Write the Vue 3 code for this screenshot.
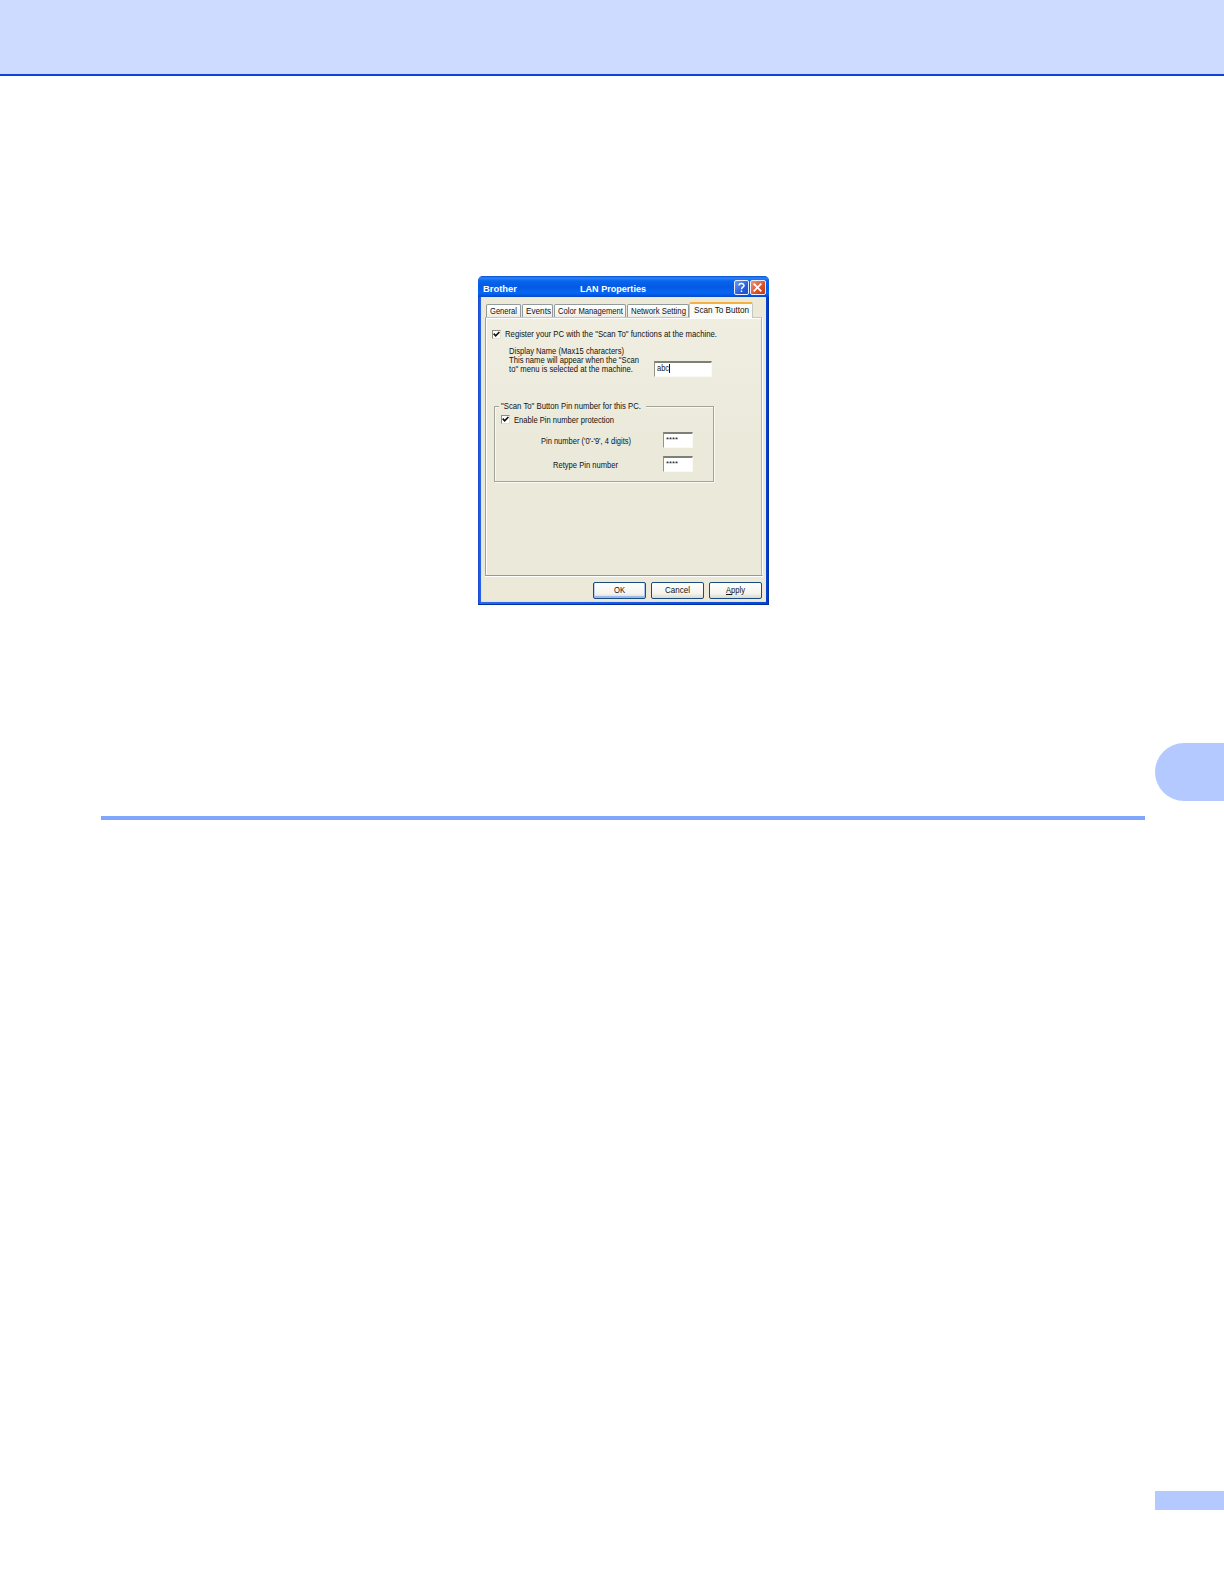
<script setup>
import { h, ref } from 'vue'

// Condensed dialog lettering: each label is set to a fixed measure.
const Label = (props) =>
  h('svg', { width: props.w, height: 10, style: 'display:block;overflow:visible;flex:none' }, [
    h('text', {
      x: 0,
      y: 8,
      textLength: props.w,
      lengthAdjust: 'spacingAndGlyphs',
      'font-size': props.size || 9.1,
      'font-weight': props.bold ? 700 : 400,
      fill: props.color || '#121210',
    }, props.text),
  ])
Label.props = ['text', 'w', 'size', 'bold', 'color']

const tabs = [
  { text: 'General', w: 27, cls: 'general' },
  { text: 'Events', w: 25, cls: 'events' },
  { text: 'Color Management', w: 65, cls: 'color' },
  { text: 'Network Setting', w: 55, cls: 'network' },
  { text: 'Scan To Button', w: 55, cls: 'active' },
]
const pins = [
  { text: "Pin number ('0'-'9', 4 digits)", w: 90, cls: 'first' },
  { text: 'Retype Pin number', w: 65, cls: 'second' },
]
const buttons = [
  { text: 'OK', w: 11, cls: 'default' },
  { text: 'Cancel', w: 25, cls: '' },
  { text: 'Apply', w: 19, cls: 'apply' },
]
const registered = ref(true)
const pinEnabled = ref(true)
</script>

<template>
  <div class="page">
    <header class="band"></header>

    <section class="dialog">
      <div class="titlebar">
        <Label text="Brother" :w="34" :size="9.4" :bold="true" color="#fff" />
        <Label class="title" text="LAN Properties" :w="66" :size="9.4" :bold="true" color="#fff" />
        <div class="caption-button help">
          <svg width="13" height="13" viewBox="0 0 13 13"><path d="M4 4.6C4 1.9 9 1.9 9 4.5C9 6.2 6.5 6.2 6.5 8.2M6.5 9.4V11" fill="none" stroke="#fff" stroke-width="1.5" /></svg>
        </div>
        <div class="caption-button close">
          <svg width="13" height="13" viewBox="0 0 13 13"><path d="M2.7 2.7L10.3 10.3M10.3 2.7L2.7 10.3" stroke="#fff" stroke-width="1.8" /></svg>
        </div>
      </div>

      <div class="body">
        <nav class="tabs">
          <div v-for="t in tabs" :key="t.text" class="tab" :class="t.cls"><Label :text="t.text" :w="t.w" /></div>
        </nav>

        <div class="panel">
          <div class="register" @click="registered = !registered">
            <span class="check"><svg v-if="registered" width="7" height="7" viewBox="0 0 7 7"><path d="M.7 2.6L2.7 4.8L6.4 1" /></svg></span>
            <Label text="Register your PC with the &quot;Scan To&quot; functions at the machine." :w="212" />
          </div>

          <div class="name-row">
            <div class="description">
              <Label text="Display Name (Max15 characters)" :w="115" />
              <Label text="This name will appear when the &quot;Scan" :w="130" />
              <Label text="to&quot; menu is selected at the machine." :w="124" />
            </div>
            <div class="field name"><Label text="abc" :w="12" /><i class="caret"></i></div>
          </div>

          <div class="group">
            <div class="legend"><Label text="&quot;Scan To&quot; Button Pin number for this PC." :w="140" /></div>
            <div class="enable" @click="pinEnabled = !pinEnabled">
              <span class="check"><svg v-if="pinEnabled" width="7" height="7" viewBox="0 0 7 7"><path d="M.7 2.6L2.7 4.8L6.4 1" /></svg></span>
              <Label text="Enable Pin number protection" :w="100" />
            </div>
            <div v-for="p in pins" :key="p.text" class="pin" :class="p.cls">
              <Label :text="p.text" :w="p.w" />
              <div class="field"><Label text="****" :w="12" :size="8" /></div>
            </div>
          </div>
        </div>

        <footer class="actions">
          <div v-for="b in buttons" :key="b.text" class="button" :class="b.cls"><Label :text="b.text" :w="b.w" /></div>
        </footer>
      </div>
    </section>

    <div class="chapter"></div>
    <div class="rule"></div>
    <div class="folio"></div>
  </div>
</template>

<style>
body { margin: 0; background: #fff; }
</style>

<style scoped>
.page { width: 1224px; height: 1584px; display: flex; flex-direction: column; overflow: hidden; background: #fff; font-family: "Liberation Sans", Arial, sans-serif; }
.page * { box-sizing: border-box; }
.band { height: 76px; flex: none; background: #ccdbff; border-bottom: 2px solid #0c45d6; }
.dialog { width: 291px; height: 329px; flex: none; margin: 200px 0 0 478px; padding: 0 3px 2px; background: linear-gradient(90deg, #1747cf 0, #2a68ed 3px, #0848d8 288px, #00309f 291px); border-bottom: 1px solid #00309f; border-radius: 5px 5px 0 0; }
.titlebar { height: 21px; margin: 0 -3px; padding: 0 3px 0 5px; display: flex; align-items: flex-start; border-radius: 5px 5px 0 0; background: linear-gradient(#0a4fc9 0, #2b83fa 2px, #0865ee 5px, #0459e2 11px, #0567f5 17px, #0449cb 21px); }
.titlebar > svg { margin-top: 8px; }
.titlebar > .title { margin-left: 63px; }
.caption-button { width: 15px; height: 15px; margin-top: 4px; border: 1px solid #e7edff; border-radius: 2px; background: linear-gradient(135deg, #6d9bf4, #2459d9 65%, #2050c6); }
.caption-button svg { display: block; }
.help { margin-left: 88px; }
.close { width: 16px; margin-left: 1px; background: linear-gradient(135deg, #ee9577, #d9512d 60%, #bd3a16); }
.body { height: 305px; padding: 5px 4px 0; background: #ece9d8; box-shadow: inset 1px 0 #d9e3f1, inset 0 -1px #d2e5f5; }
.tabs { height: 15px; display: flex; align-items: flex-end; padding-left: 1px; }
.tab { height: 13px; margin-right: 1px; padding: 1px 0 0 4px; border: 1px solid #919b9c; border-bottom: 0; border-radius: 2px 2px 0 0; background: linear-gradient(#fff, #f6f5f0 70%, #eceae2); }
.general { width: 35px; padding-left: 3px; }
.events { width: 31px; padding-left: 3px; }
.color { width: 72px; padding-left: 3px; }
.network { width: 62px; margin-right: 0; padding-left: 3px; }
.active { position: relative; width: 64px; height: 16px; margin: 0 0 -1px; padding: 1px 0 0 4px; border-top: 2px solid #f5b044; border-color: #f5b044 #c5c6bd transparent; background: #fbfbf8; }
.panel { width: 278px; height: 259px; padding: 12px 0 0 6px; border: 1px solid #9da19b; border-top-color: #c5c6bd; border-right: 1px solid #fff; border-bottom-color: #919b9c; box-shadow: inset -1px 0 #b5b4a8, inset 1px 0 #fff, inset 0 1px #fff, 0 1px #fff; background: linear-gradient(#f0eee1, #ebe9da 50%); }
.register, .enable { display: flex; }
.check { width: 9px; height: 9px; border: 1px solid #8d8b80; border-right-color: #e2e0d4; border-bottom-color: #e2e0d4; background: #fff; }
.check svg { display: block; }
.check path { fill: none; stroke: #111; stroke-width: 1.7; }
.register > svg { margin: -1px 0 1px 4px; }
.name-row { display: flex; padding: 6px 0 0 17px; height: 42px; }
.description { width: 145px; }
.description > svg { margin-bottom: -1px; }
.field { height: 16px; width: 30px; padding: 1px 2px; border: 1px solid #96948a; border-top: 2px solid #807f76; border-right-color: #faf9f3; border-bottom-color: #faf9f3; background: #fff; }
.name { display: flex; flex: none; width: 58px; margin-top: 15px; }
.name > svg { margin-top: -1px; }
.caret { width: 1px; height: 9px; background: #111; }
.group { width: 220px; height: 76px; margin: 24px 0 0 2px; border: 1px solid #a5a498; box-shadow: 1px 1px #faf9f0, inset 1px 1px #faf9f0; }
.legend { width: 147px; height: 10px; margin: -6px 0 0 4px; padding-left: 2px; background: #ecebdd; }
.enable { margin: 4px 0 0 6px; }
.enable > svg { margin-left: 4px; }
.pin { display: flex; height: 16px; align-items: flex-start; }
.pin > svg { margin-top: 4px; }
.first { margin: 7px 0 0 46px; }
.first .field { margin-left: 32px; }
.second { margin: 8px 0 0 58px; }
.second .field { margin-left: 45px; }
.pin .field { padding-top: 0; }
.actions { display: flex; gap: 5px; margin: 6px 0 0 108px; }
.button { width: 53px; height: 17px; display: flex; justify-content: center; padding-top: 2px; border: 1px solid #174d80; border-radius: 2px; background: linear-gradient(#fff, #f4f3ed 70%, #dcd8cb); }
.default { box-shadow: inset 0 -2px #9db8ec, inset 1px 0 #bdd0f2, inset -1px 0 #a9c1ed; }
.apply { background: linear-gradient(#161614, #161614) 16px 11px / 6px 1px no-repeat, linear-gradient(#fff, #f4f3ed 70%, #dcd8cb); }
.chapter { width: 69px; height: 58px; flex: none; align-self: flex-end; margin-top: 138px; border-radius: 29px 0 0 29px; background: #b3c9ff; }
.rule { width: 1044px; height: 4px; flex: none; margin: 15px 0 0 101px; background: #80a7fb; }
.folio { width: 69px; height: 19px; flex: none; align-self: flex-end; margin-top: 671px; background: #b3c9ff; }
</style>
